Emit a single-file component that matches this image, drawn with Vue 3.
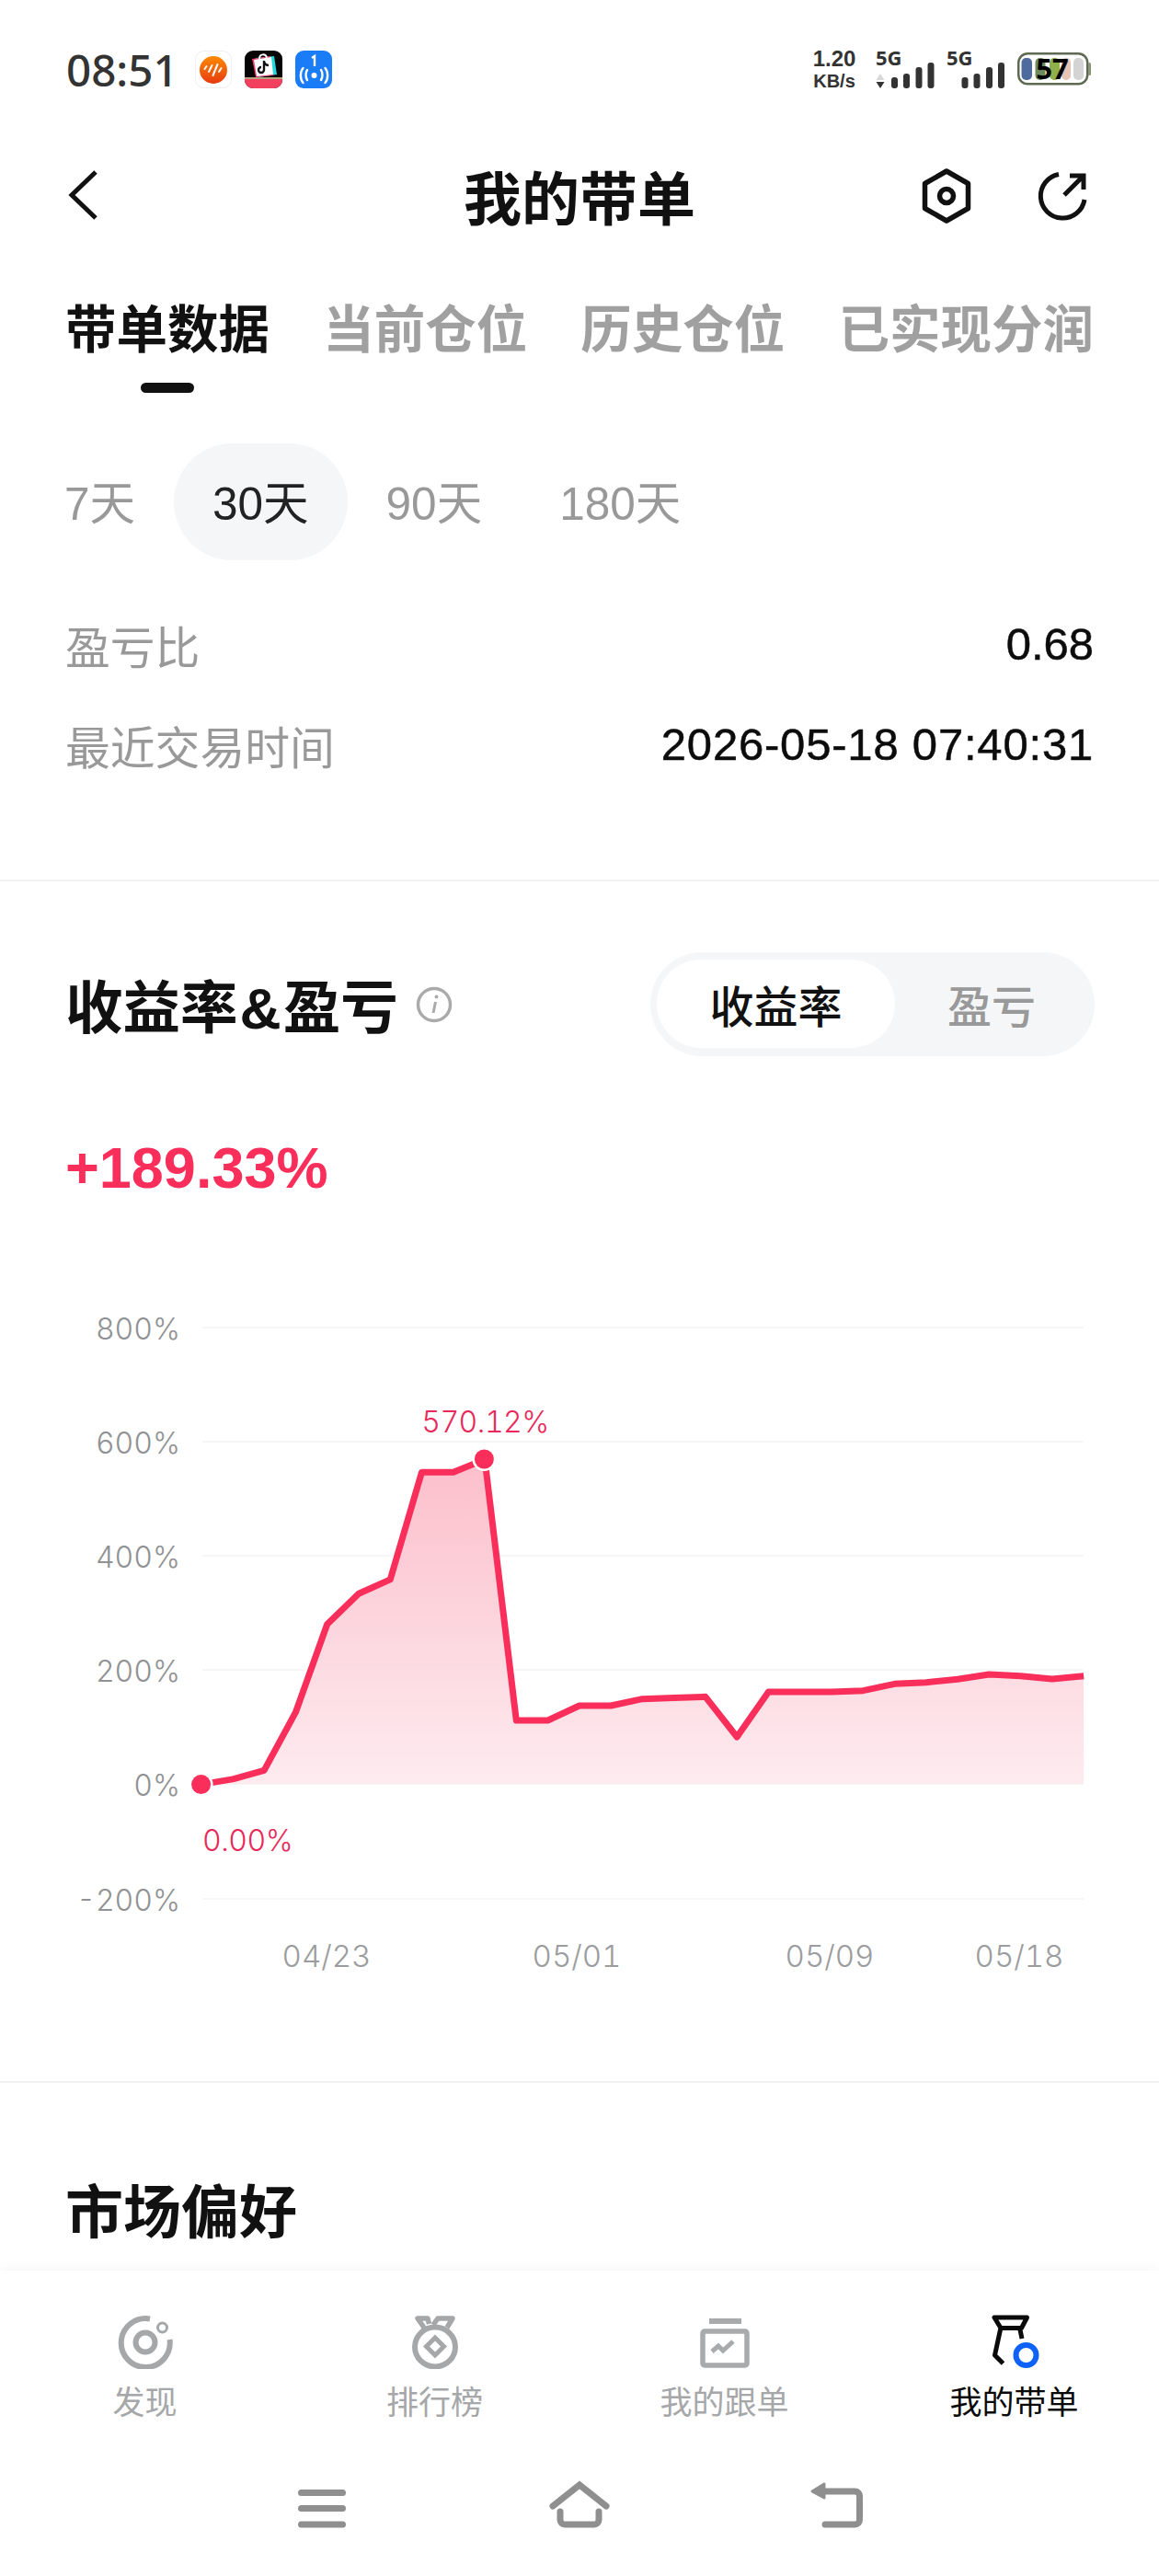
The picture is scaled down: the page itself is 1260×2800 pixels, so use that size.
<template>
  <div class="page">
    <div class="content">
      <!-- status bar -->
      <div class="status-bar">
        <span class="time">08:51</span>
        <div class="app-icons">
          <svg width="40" height="41" viewBox="0 0 40 41">
            <defs>
              <linearGradient id="orangeFill" x1="0" y1="0" x2="0" y2="1">
                <stop offset="0" stop-color="#ff8a00" />
                <stop offset="1" stop-color="#e63a10" />
              </linearGradient>
            </defs>
            <rect x="0.5" y="0.5" width="39" height="40" rx="9" fill="#fff" stroke="#eee" />
            <circle cx="20" cy="21" r="15" fill="url(#orangeFill)" />
            <path d="M10.500 20l2-3M15 23l3.500-7M19.500 27l5-12M26 23l2.500-4" stroke="#fff" stroke-width="2" stroke-linecap="round" />
          </svg>
          <svg width="41" height="41" viewBox="0 0 41 41">
            <rect width="41" height="41" rx="9" fill="#050505" />
            <path d="M0 31h41v1a9 9 0 0 1-9 9H9a9 9 0 0 1-9-9z" fill="#f4405f" />
            <path d="M0 30h41" stroke="#f2d7a5" stroke-width="1.5" />
            <path d="M12 8l20-2 3 20-20 3z" fill="#22d7dd" />
            <path d="M8 9l20-3 3 21-19 2z" fill="#f2386a" />
            <path d="M10 10l19-3 2 19-18 2z" fill="#fff" />
            <path d="M16 9c0-6 7-6 8-1" fill="none" stroke="#fff" stroke-width="2" />
            <path d="M21 11v10a3 3 0 1 1-3-3M21 12c1 3 3 4 5 4" fill="none" stroke="#111" stroke-width="2.4" />
          </svg>
          <svg width="40" height="41" viewBox="0 0 40 41">
            <rect width="40" height="41" rx="9" fill="#1a7cf6" />
            <path d="M18 8l3-2v11" fill="none" stroke="#fff" stroke-width="2.400" />
            <circle cx="20.5" cy="27" r="3" fill="#fff" />
            <path d="M13 21c-2 3-2 8 0 11M28 21c2 3 2 8 0 11M8.500 19c-3.500 4-3.500 12 0 16M32.500 19c3.500 4 3.500 12 0 16" fill="none" stroke="#fff" stroke-width="2.400" stroke-linecap="round" />
          </svg>
        </div>
        <div class="status-right">
          <div class="speed">
            <span class="speed-num">1.20</span>
            <span class="speed-unit">KB/s</span>
          </div>
          <svg class="signal" width="64" height="49" viewBox="0 -7 64 49">
            <text x="0" y="17" class="net-text">5G</text>
            <path d="M0.500 33l4.500-7 4.500 7z" fill="#d8d8d8" />
            <path d="M0.500 35l4.500 7 4.500-7z" fill="#333" />
            <rect v-for="b in signalBars" :key="b.x" :x="b.x + 0.5" :y="b.y" width="7" :height="42 - b.y" rx="3" fill="#333" />
          </svg>
          <svg class="signal" width="64" height="49" viewBox="0 -7 64 49">
            <text x="0" y="17" class="net-text">5G</text>
            <rect v-for="b in signalBars" :key="b.x" :x="b.x" :y="b.y" width="7" :height="42 - b.y" rx="3" fill="#333" />
          </svg>
          <svg class="battery" width="80" height="48" viewBox="0 -6 80 48">
            <rect x="1.250" y="1.250" width="75" height="33" rx="10" fill="#fff" stroke="#5e6a52" stroke-width="2.500" />
            <rect x="77" y="11" width="3" height="14" rx="1.500" fill="#8a9478" />
            <rect x="4.500" y="6" width="11.500" height="24" rx="5" fill="#4f6a9c" />
            <rect x="19.500" y="6" width="11" height="24" rx="5" fill="#6d8b5d" />
            <rect x="35" y="6" width="11" height="24" rx="5" fill="#8fb04a" />
            <rect x="48" y="6" width="10" height="24" rx="5" fill="#e6c4b4" />
            <rect x="61" y="6" width="11" height="24" rx="5" fill="#d4d4d4" />
            <text x="38" y="28.500" class="battery-text">57</text>
          </svg>
        </div>
      </div>

      <!-- title bar -->
      <div class="nav-bar">
        <svg class="back-icon" width="32" height="56" viewBox="0 0 32 56">
          <path d="M30 3L4 28l26 25" fill="none" stroke="#111" stroke-width="5" />
        </svg>
        <h1 class="page-title">我的带单</h1>
        <div class="nav-actions">
          <svg class="hex-icon" width="54" height="60" viewBox="0 0 54 60">
            <path d="M27 3l23.500 13.500v27L27 57 3.500 43.500v-27z" fill="none" stroke="#111" stroke-width="5.500" stroke-linejoin="round" />
            <circle cx="27" cy="30" r="7.500" fill="none" stroke="#111" stroke-width="5.500" />
          </svg>
          <svg width="56" height="60" viewBox="0 0 56 60">
            <path d="M24 4.500A24 24 0 1 0 52 32" fill="none" stroke="#111" stroke-width="5" />
            <path d="M30 27L50 7M36 6h15v15" fill="none" stroke="#111" stroke-width="5" />
          </svg>
        </div>
      </div>

      <!-- tabs -->
      <div class="tabs">
        <div v-for="(t, i) in tabs" :key="t" class="tab" :class="{ active: i === 0 }">
          <span>{{ t }}</span>
          <i v-if="i === 0" class="tab-line"></i>
        </div>
      </div>

      <div class="periods">
        <span v-for="p in periods" :key="p" class="period" :class="{ active: p === '30天' }">{{ p }}</span>
      </div>

      <div class="info-rows">
        <div class="info-row">
          <span class="info-label">盈亏比</span>
          <span class="info-value">0.68</span>
        </div>
        <div class="info-row">
          <span class="info-label">最近交易时间</span>
          <span class="info-value date">2026-05-18 07:40:31</span>
        </div>
      </div>

      <div class="divider first"></div>

      <div class="section-head">
        <div class="section-title">
          <h2>收益率<span class="amp">&amp;</span>盈亏</h2>
          <svg width="40" height="40" viewBox="0 0 40 40">
            <circle cx="20" cy="20" r="17.500" fill="none" stroke="#aaa" stroke-width="3.500" />
            <path d="M21.500 17l-2.500 12" stroke="#aaa" stroke-width="3" />
            <circle cx="22.500" cy="11.500" r="2" fill="#aaa" />
          </svg>
        </div>
        <div class="toggle">
          <span class="toggle-item active">收益率</span>
          <span class="toggle-item">盈亏</span>
        </div>
      </div>

      <div class="total">+189.33%</div>

      <svg class="chart" width="1260" height="780" viewBox="0 1400 1260 780">
        <defs>
          <linearGradient id="areaFill" gradientUnits="userSpaceOnUse" x1="0" y1="1586" x2="0" y2="1939">
            <stop offset="0" stop-color="#fcbfcb" />
            <stop offset="1" stop-color="#fdebef" />
          </linearGradient>
        </defs>
        <g v-for="g in gridLines" :key="g.label">
          <line x1="220" x2="1178" :y1="g.y" :y2="g.y" stroke="#f6f6f6" stroke-width="2" />
          <text x="196" :y="g.y + 13" class="axis-y">{{ g.label }}</text>
        </g>
        <path :d="areaPath" fill="url(#areaFill)" />
        <polyline :points="linePoints" fill="none" stroke="#f92e5a" stroke-width="7" stroke-linejoin="round" />
        <circle cx="218.600" cy="1939.600" r="13" fill="#fff" />
        <circle cx="218.600" cy="1939.600" r="10.500" fill="#f92e5a" />
        <circle cx="526.400" cy="1586" r="13" fill="#fff" />
        <circle cx="526.400" cy="1586" r="10.500" fill="#f92e5a" />
        <text x="527.500" y="1557" class="peak">570.12%</text>
        <text x="220" y="2012" class="start">0.00%</text>
        <text v-for="d in dateLabels" :key="d.text" :x="d.x" y="2138" class="axis-x">{{ d.text }}</text>
      </svg>

      <div class="divider second"></div>

      <h2 class="market-title">市场偏好</h2>
    </div>

    <!-- bottom nav -->
    <div class="bottom">
      <div class="tab-bar">
        <div class="tab-item">
          <svg width="60" height="60" viewBox="0 0 60 60">
            <path d="M35 5.500A26.500 26.500 0 1 0 56.500 28" fill="none" stroke="#a5a7a9" stroke-width="6" />
            <circle cx="30" cy="31" r="10.500" fill="none" stroke="#a5a7a9" stroke-width="6" />
            <circle cx="48.500" cy="15" r="5" fill="none" stroke="#a5a7a9" stroke-width="3" />
          </svg>
          <span>发现</span>
        </div>
        <div class="tab-item">
          <svg width="60" height="60" viewBox="0 0 60 60">
            <ellipse cx="30" cy="36" rx="22" ry="21.500" fill="none" stroke="#a5a7a9" stroke-width="6" />
            <path d="M30 26l9.500 9.500L30 45l-9.500-9.500z" fill="none" stroke="#a5a7a9" stroke-width="5" />
            <path d="M18 15L11 5h11l1.500 6M28 12l5-7h16l-6 10" fill="none" stroke="#a5a7a9" stroke-width="5.500" stroke-linejoin="round" />
          </svg>
          <span>排行榜</span>
        </div>
        <div class="tab-item">
          <svg width="60" height="60" viewBox="0 0 60 60">
            <rect x="13" y="5" width="35" height="6" fill="#a8aaac" />
            <rect x="6" y="19" width="48" height="37" rx="2" fill="none" stroke="#a8aaac" stroke-width="5.500" />
            <path d="M16 41l7-6 5 5 11-10" fill="none" stroke="#a8aaac" stroke-width="5" />
          </svg>
          <span>我的跟单</span>
        </div>
        <div class="tab-item on">
          <svg width="60" height="60" viewBox="0 0 60 60">
            <path d="M8 4h35.500l-6 11.500H15zM15 15L8.500 45l9 9M35.500 15l2.500 12" fill="none" stroke="#0a0a0a" stroke-width="5" stroke-linejoin="round" />
            <circle cx="42.500" cy="45" r="11" fill="#fff" stroke="#0e62f5" stroke-width="6" />
          </svg>
          <span>我的带单</span>
        </div>
      </div>
      <div class="sys-bar">
        <svg width="80" height="60" viewBox="0 0 80 60">
          <path d="M17.500 16.500h45M17.500 33.500h45M17.500 51h45" stroke="#8f8f8f" stroke-width="7" stroke-linecap="round" />
        </svg>
        <svg width="80" height="60" viewBox="0 0 80 60">
          <path d="M11 31L40 8l29 23M19 37v9a5 5 0 0 0 5 5h32a5 5 0 0 0 5-5v-9" fill="none" stroke="#8f8f8f" stroke-width="7" stroke-linecap="round" />
        </svg>
        <svg width="80" height="60" viewBox="0 0 80 60">
          <path d="M27 15h32.500a5 5 0 0 1 5 5v26a5 5 0 0 1-5 5H27" fill="none" stroke="#8f8f8f" stroke-width="7" stroke-linecap="round" />
          <path d="M13 15l13-8v15z" fill="#8f8f8f" stroke="#8f8f8f" stroke-width="3" stroke-linejoin="round" />
        </svg>
      </div>
    </div>
  </div>
</template>

<script setup>
import { computed } from 'vue'

const tabs = ['带单数据', '当前仓位', '历史仓位', '已实现分润']
const periods = ['7天', '30天', '90天', '180天']

const signalBars = [
  { x: 16.5, y: 30 },
  { x: 29.5, y: 26 },
  { x: 43, y: 19 },
  { x: 56, y: 14 }
]

const gridLines = [
  { label: '800%', y: 1443 },
  { label: '600%', y: 1567 },
  { label: '400%', y: 1691 },
  { label: '200%', y: 1815 },
  { label: '0%', y: 1939 },
  { label: '-200%', y: 2064 }
]

const dateLabels = [
  { text: '04/23', x: 355 },
  { text: '05/01', x: 627 },
  { text: '05/09', x: 902 },
  { text: '05/18', x: 1108 }
]

// y pixel of each day on the curve
const curve = [
  1939.6, 1933.9, 1924.3, 1861.2, 1765.5, 1732.2, 1716.9, 1600.2, 1600.2, 1586.4,
  1870, 1870, 1854, 1854, 1846.7, 1845.5, 1844.3, 1888, 1839, 1839,
  1839, 1837.7, 1830.3, 1828.7, 1825.3, 1820, 1821.7, 1825, 1821.7
]

const points = curve.map((y, i) => [218.6 + i * 34.27, y])
const linePoints = computed(() => points.map((p) => p.join(',')).join(' '))
const areaPath = computed(() => {
  const last = points[points.length - 1]
  return 'M' + points.map((p) => p.join(' ')).join('L') + `L${last[0]} 1939L218.6 1939Z`
})
</script>

<style scoped>
.page {
  width: 1260px;
  height: 2800px;
  display: flex;
  flex-direction: column;
  background: #fff;
  overflow: hidden;
  font-family: "Liberation Sans", "Noto Sans CJK SC", sans-serif;
  color: #111;
}

.content {
  flex: 1;
  min-height: 0;
  overflow: hidden;
}

.status-bar {
  height: 150px;
  padding: 0 74px 0 72px;
  display: flex;
  align-items: center;
}

.time {
  font-family: "Noto Sans", sans-serif;
  font-size: 47.5px;
  font-weight: 500;
  color: #333;
  width: 120px;
}

.app-icons {
  margin-left: 20px;
  display: flex;
  gap: 14px;
}

.status-right {
  margin-left: auto;
  display: flex;
  align-items: center;
}

.speed {
  width: 50px;
  margin: 2px 20px 0 0;
  display: flex;
  flex-direction: column;
  align-items: center;
  font-weight: 700;
  color: #333;
  white-space: nowrap;
}

.speed-num {
  font-size: 24px;
  line-height: 24px;
}

.speed-unit {
  font-size: 20px;
  line-height: 24px;
}

.signal {
  margin: -7px 13px 0 0;
}

.net-text {
  font-family: "Noto Sans", sans-serif;
  font-weight: 700;
  font-size: 22px;
  fill: #333;
}

.battery-text {
  font-family: "Noto Sans", sans-serif;
  font-weight: 700;
  font-size: 31px;
  fill: #000;
  text-anchor: middle;
}

.nav-bar {
  height: 128px;
  padding: 6px 76px 0;
  box-sizing: border-box;
  display: flex;
  align-items: center;
  justify-content: center;
  position: relative;
}

.back-icon {
  position: absolute;
  left: 74px;
  top: 34px;
}

.page-title {
  margin: 0;
  font-size: 63px;
  font-weight: 700;
  line-height: 80px;
}

.nav-actions {
  position: absolute;
  left: 1002px;
  top: 35px;
  display: flex;
  gap: 71px;
}

.hex-icon {
  margin-top: -2px;
}

.tabs {
  margin-top: 49px;
  padding: 0 71px;
  display: flex;
  justify-content: space-between;
}

.tab {
  display: flex;
  flex-direction: column;
  align-items: center;
  font-size: 55.5px;
  font-weight: 700;
  line-height: 64px;
  color: #a0a0a0;
}

.tab.active {
  color: #111;
}

.tab-line {
  display: block;
  width: 58px;
  height: 11px;
  margin-top: 25px;
  border-radius: 6px;
  background: #111;
}

.periods {
  margin-top: 55px;
  padding-left: 28px;
  display: flex;
  height: 127px;
}

.period {
  display: flex;
  align-items: center;
  padding: 0 42px 5px;
  font-size: 49.5px;
  color: #999;
  border-radius: 64px;
}

.period.active {
  background: #f5f6f7;
  color: #222;
}

.info-rows {
  margin-top: 39px;
  padding: 0 71px;
}

.info-row {
  height: 109px;
  padding-bottom: 5px;
  box-sizing: border-box;
  display: flex;
  align-items: center;
  justify-content: space-between;
}

.info-label {
  font-size: 48.8px;
  color: #999;
}

.info-value {
  font-size: 49px;
  color: #0c0c0c;
  -webkit-text-stroke: 0.5px #0c0c0c;
}

.info-value.date {
  letter-spacing: 0.8px;
}

.divider {
  height: 2px;
  background: #f0f1f2;
}

.divider.first {
  margin-top: 90px;
}

.divider.second {
  margin-top: 82px;
}

.section-head {
  margin-top: 77px;
  padding: 0 70px 0 71px;
  height: 113px;
  display: flex;
  align-items: center;
  justify-content: space-between;
}

.section-title {
  display: flex;
  align-items: center;
  gap: 19px;
}

.section-title h2 {
  margin: 8px 0 0;
  font-size: 62.5px;
  font-weight: 700;
  line-height: 80px;
}

.amp {
  margin: 0 2px;
}

.toggle {
  width: 483px;
  height: 113px;
  padding: 8px 7px 9px;
  box-sizing: border-box;
  display: flex;
  border-radius: 57px;
  background: #f5f6f7;
}

.toggle-item {
  flex: 1;
  display: flex;
  align-items: center;
  justify-content: center;
  font-size: 48px;
  font-weight: 500;
  color: #999;
  border-radius: 48px;
}

.toggle-item.active {
  flex: 0 0 259px;
  background: #fff;
  color: #111;
}

.total {
  margin-top: 81px;
  padding-left: 71px;
  font-size: 63px;
  font-weight: 700;
  line-height: 80px;
  color: #f92e5a;
}

.chart {
  display: block;
  margin-top: 91px;
}

.chart text {
  font-family: Inter, "Liberation Sans", sans-serif;
  font-weight: 300;
  font-variant-numeric: tabular-nums;
}

.axis-y {
  font-size: 32px;
  fill: #8f9193;
  text-anchor: end;
}

.axis-x {
  font-size: 33px;
  fill: #9a9c9e;
  text-anchor: middle;
}

.peak {
  font-size: 32px;
  letter-spacing: -0.5px;
  fill: #e8285a;
  text-anchor: middle;
}

.start {
  font-size: 32px;
  letter-spacing: -0.5px;
  fill: #e8285a;
}

.market-title {
  margin: 101px 0 0 71px;
  font-size: 63px;
  font-weight: 700;
  line-height: 80px;
}

.bottom {
  height: 332px;
  flex: none;
  background: #fff;
  box-shadow: 0 -4px 10px rgba(0, 0, 0, 0.03);
  position: relative;
}

.tab-bar {
  padding-top: 47px;
  display: grid;
  grid-template-columns: repeat(4, 315px);
}

.tab-item {
  display: flex;
  flex-direction: column;
  align-items: center;
  gap: 17px;
  font-size: 35px;
  line-height: 40px;
  color: #a5a7a9;
}

.tab-item svg {
  display: block;
}

.tab-item.on {
  color: #0a0a0a;
}

.sys-bar {
  margin-top: 61px;
  display: flex;
  justify-content: center;
  gap: 200px;
}
</style>

<style>
html,
body {
  margin: 0;
  background: #fff;
}
</style>
